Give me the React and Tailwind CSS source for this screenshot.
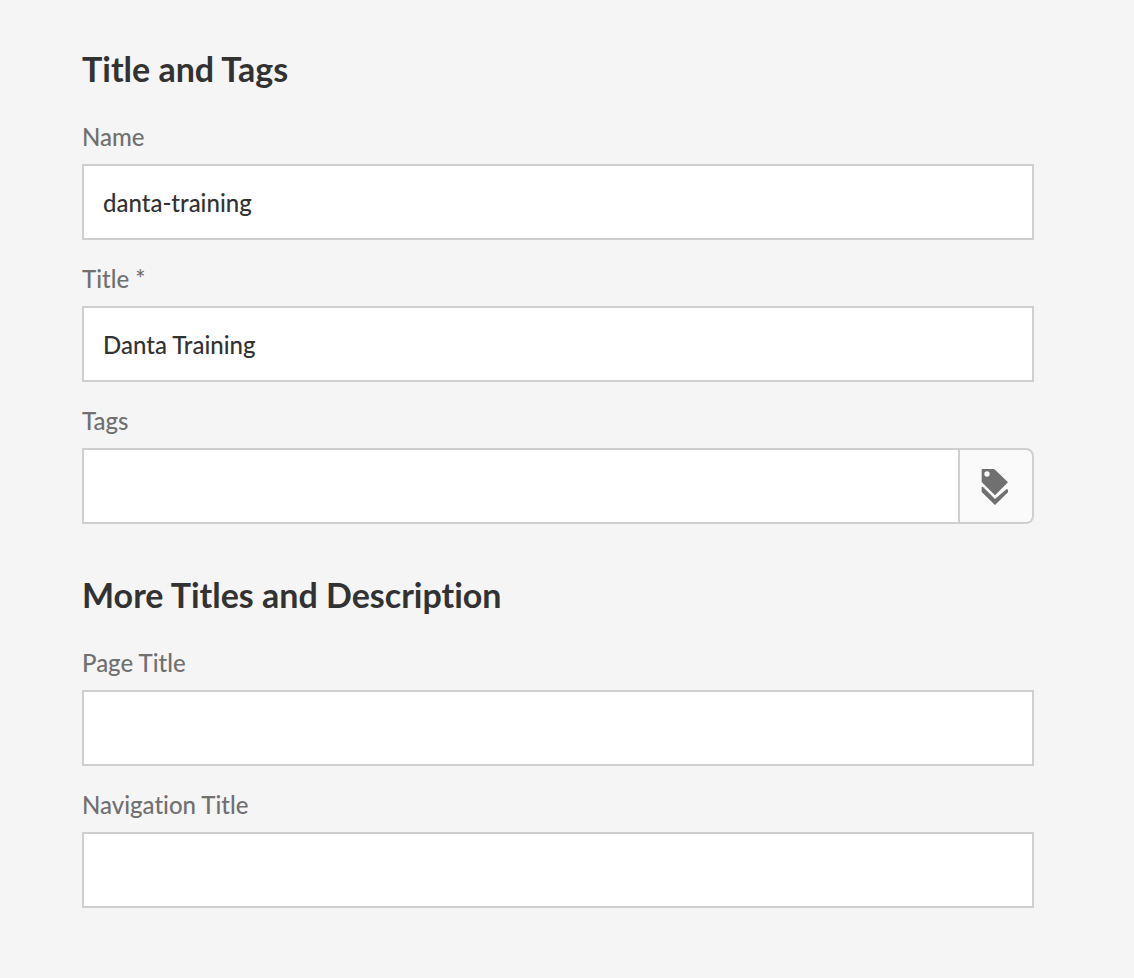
import { useId } from 'react';

const box =
  'block h-[76px] w-full min-w-0 border-2 border-[#cfcfcf] bg-white px-[19px] text-2xl font-medium text-[#323232] outline-none focus:border-[#2680eb]';

function TagsIcon() {
  return (
    <svg viewBox="3 0 90 120" className="h-10 w-[30px] fill-[#707070]" aria-hidden="true">
      <path
        fillRule="evenodd"
        d="M8 9H39Q43 9 46 12L84 49L45 88L5 48V12Q5 9 8 9ZM21 16A8 8 0 1 0 21 32A8 8 0 1 0 21 16Z"
      />
      <path d="M5 66Q5 60 10 64L45 99L79 70Q84 68 84 73V79L45 117L5 78Z" />
    </svg>
  );
}

function Field({ label, defaultValue = '', required = false, action = null }) {
  const id = useId();
  return (
    <div className="pt-5">
      <label htmlFor={id} className="mb-2 block text-2xl leading-[38px] font-medium text-[#707070]">
        {label}
        {required && ' *'}
      </label>
      <div className="flex">
        <input id={id} type="text" defaultValue={defaultValue} required={required} className={box} />
        {action}
      </div>
    </div>
  );
}

function Section({ title, children }) {
  return (
    <section className="pb-12">
      <h2 className="mb-1.5 text-[34px] leading-[46px] font-bold text-[#323232]">{title}</h2>
      {children}
    </section>
  );
}

export default function App() {
  return (
    <main className="min-h-screen bg-[#f5f5f5] pt-[46px] pr-[100px] pl-[82px] font-['Lato',sans-serif] [font-variant-ligatures:none]">
      <form>
        <Section title="Title and Tags">
          <Field label="Name" defaultValue="danta-training" />
          <Field label="Title" defaultValue="Danta Training" required />
          <Field
            label="Tags"
            action={
              <button
                type="button"
                aria-label="Open tag picker"
                className="flex h-[76px] w-[74px] shrink-0 items-center justify-center rounded-r-lg border-2 border-l-0 border-[#cfcfcf] bg-[#fafafa]"
              >
                <TagsIcon />
              </button>
            }
          />
        </Section>
        <Section title="More Titles and Description">
          <Field label="Page Title" />
          <Field label="Navigation Title" />
        </Section>
      </form>
    </main>
  );
}
